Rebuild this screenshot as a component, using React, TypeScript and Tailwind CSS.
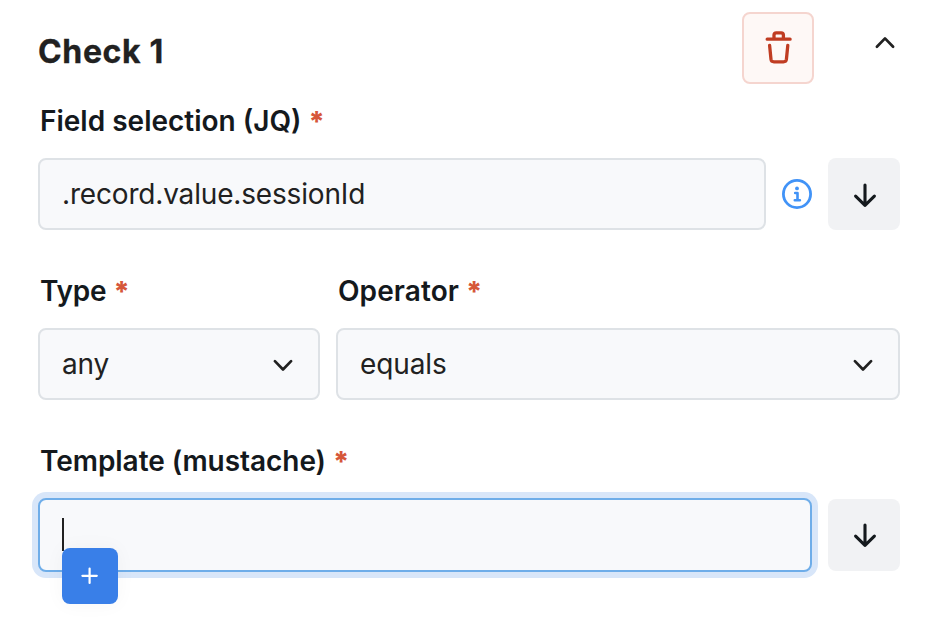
import React from "react";

function Label({ text, className = "" }: { text: string; className?: string }) {
  return (
    <div className={`flex h-[34px] items-center whitespace-pre pl-[2px] text-[28px] font-semibold leading-[34px] text-[#14191d] ${className}`}>
      <span>{text}</span>
      <span className="ml-[7px] mt-[2px] text-[28px] font-extrabold tracking-normal text-[#d6573a]">*</span>
    </div>
  );
}

function Chevron({ up = false }: { up?: boolean }) {
  return (
    <svg width="24" height="24" viewBox="0 0 24 24" fill="none" stroke="#212121" strokeWidth="2.7" strokeLinecap="round" strokeLinejoin="round">
      <path d={up ? "M3.9 16.8 12 8.4l8.1 8.4" : "M3.9 9.1 12 17.5l8.1-8.4"} />
    </svg>
  );
}

function ArrowButton({ className = "" }: { className?: string }) {
  return (
    <button className={`flex size-[72px] shrink-0 items-center justify-center rounded-[8px] bg-[#f1f2f4] ${className}`}>
      <svg width="30" height="30" viewBox="0 0 30 30" fill="none" stroke="#14191d" strokeWidth="3.1" strokeLinecap="round" strokeLinejoin="round">
        <path d="M16 6V26.3M6.6 17.2 16 26.4l9.4-9.2" />
      </svg>
    </button>
  );
}

function Select({ value, className }: { value: string; className: string }) {
  return (
    <div className={`flex h-[72px] items-center justify-between rounded-[8px] border-2 border-[#dee2e6] bg-[#f8f9fb] pl-[22px] pr-[23px] text-[28px] leading-[34px] tracking-[-0.12px] text-[#212121] ${className}`}>
      <span>{value}</span>
      <Chevron />
    </div>
  );
}

export default function App() {
  return (
    <main className="h-[640px] w-[942px] overflow-hidden bg-white pl-[38px] pr-[42px] pt-3 font-['Inter','Liberation_Sans',sans-serif]">
      <header className="flex h-[72px] items-center">
        <h2 className="mt-[7px] flex-1 text-[32px] font-bold leading-[40px] tracking-[0.65px] text-[#212121] [-webkit-text-stroke:0.3px_#212121]">Check 1</h2>
        <button className="flex size-[72px] items-center justify-center rounded-[8px] border-2 border-[#f5d5cf] bg-[#fef8f6]">
          <svg width="32" height="36" viewBox="0 0 32 36" fill="none" stroke="#c03c22" strokeWidth="3.3" strokeLinecap="round" strokeLinejoin="round">
            <path d="M5.2 9.2h22.9M12 9V5q0-2.2 2.2-2.2h5q2.2 0 2.2 2.2v4" />
            <path d="M7.6 15.3 9 29.4q.3 2.4 3 2.4h9.4q2.7 0 3-2.4l1.4-14.1" />
          </svg>
        </button>
        <div className="mb-[12px] ml-[59px] mr-[3px]"><Chevron up /></div>
      </header>
      <Label text="Field selection (JQ)" className="mt-[20px]" />
      <div className="mt-[20px] flex h-[72px] items-center">
        <div className="flex h-[72px] w-[728px] items-center rounded-[8px] border-2 border-[#dee2e6] bg-[#f8f9fb] pl-[22px] text-[28px] leading-[34px] tracking-[-0.17px] text-[#212121]">
          .record.value.sessionId
        </div>
        <svg width="30" height="30" viewBox="0 0 30 30" fill="none" stroke="#4193f7" className="mx-4 shrink-0">
          <circle cx="15" cy="15" r="13.6" strokeWidth="2.8" />
          <circle cx="15" cy="9.4" r="1.9" fill="#4193f7" stroke="none" />
          <path d="M13.2 14h2.3v7M12.8 21.2h5.1" strokeWidth="2.6" strokeLinecap="round" strokeLinejoin="round" />
        </svg>
        <ArrowButton />
      </div>
      <div className="mt-[44px] flex gap-4">
        <Label text="Type" className="w-[282px] tracking-[-0.2px]" />
        <Label text="Operator" className="tracking-[0.1px]" />
      </div>
      <div className="mt-[20px] flex gap-4">
        <Select value="any" className="w-[282px]" />
        <Select value="equals" className="flex-1" />
      </div>
      <Label text="Template (mustache)" className="mt-[44px] tracking-[-0.05px]" />
      <div className="mt-[20px] flex h-[74px] items-center gap-4">
        <div className="relative h-[74px] w-[774px] rounded-[8px] border-2 border-[#6eade9] bg-[#f8f9fb] pl-[22px] pt-[18px] shadow-[0_0_0_6px_#d8e6f9]">
          <div className="h-[33px] w-[2px] bg-[#212121]" />
          <button className="absolute left-[22px] top-[48px] flex size-[56px] items-center justify-center rounded-[8px] bg-[#397fe8] shadow-[0_0_20px_rgba(0,0,0,0.04)]">
            <svg width="20" height="20" viewBox="0 0 20 20" fill="none" stroke="#fff" strokeWidth="2.2" strokeLinecap="round">
              <path d="M9.6 2.6v14.4M2.4 9.8h14.4" />
            </svg>
          </button>
        </div>
        <ArrowButton className="pb-[2px]" />
      </div>
    </main>
  );
}
